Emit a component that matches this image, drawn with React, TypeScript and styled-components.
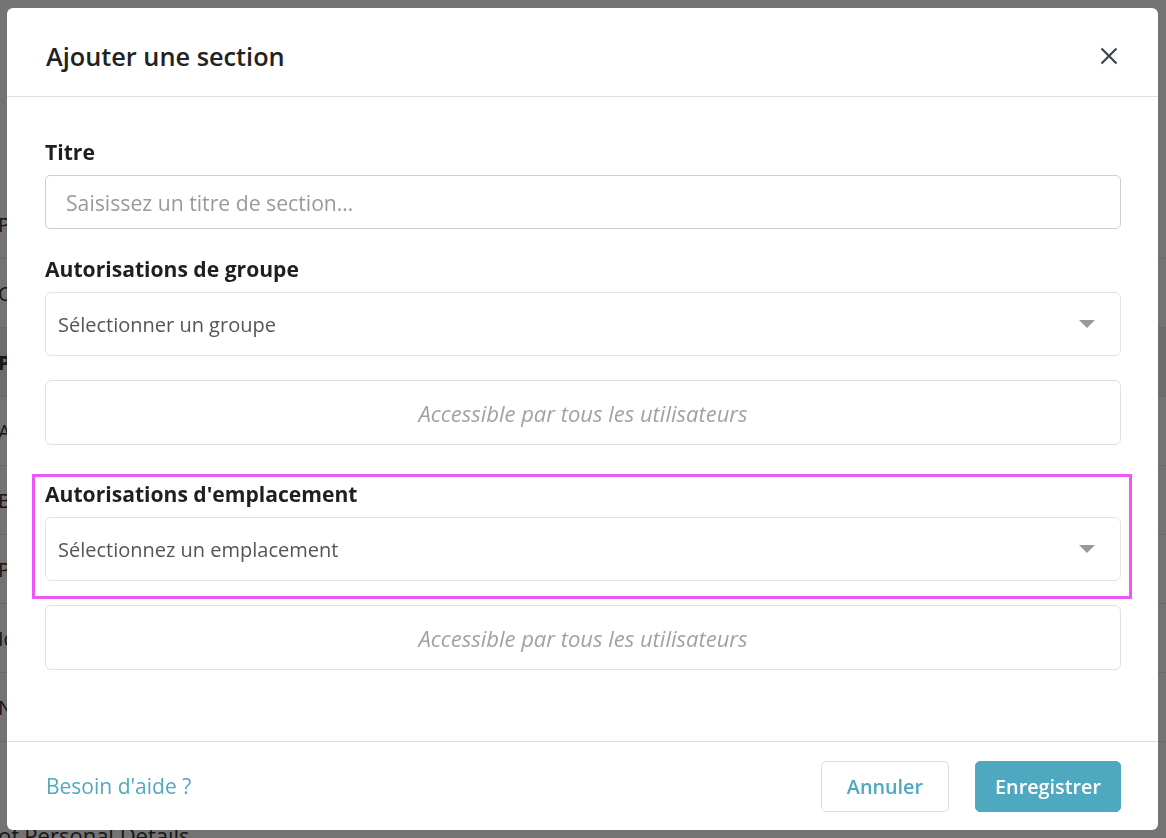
import styled, { createGlobalStyle } from 'styled-components'

const GlobalStyle = createGlobalStyle`
  html, body {
    margin: 0;
    padding: 0;
    width: 100%;
    height: 100%;
    overflow: hidden;
    background: #ffffff;
    font-family: 'Open Sans', 'Lato', sans-serif;
  }
`

const Page = styled.div`
  display: flex;
  flex-direction: column;
  padding-top: 190px;
`

const PageRow = styled.div<{ $bold?: boolean; $shade?: boolean }>`
  display: flex;
  align-items: center;
  height: 68px;
  border-bottom: 1px solid #e6e6e6;
  background: ${(p) => (p.$shade ? '#f2f2f2' : '#ffffff')};
  font-size: 20px;
  font-weight: ${(p) => (p.$bold ? 700 : 400)};
  color: #333;
`

const RowCell = styled.span`
  width: 30px;
  overflow: hidden;
  white-space: nowrap;
  margin-left: -2px;
`

const PageFooter = styled.div`
  font-size: 22px;
  color: #333;
  margin: 78px 0 0 -2px;
  white-space: nowrap;
`

const Overlay = styled.div`
  position: fixed;
  inset: 0;
  background: rgba(0, 0, 0, 0.55);
`

const Modal = styled.div`
  position: fixed;
  top: 8px;
  left: 7px;
  width: 1151px;
  height: 822px;
  background: #ffffff;
  border-radius: 6px;
  display: flex;
  flex-direction: column;
`

const ModalHeader = styled.div`
  height: 89px;
  flex-shrink: 0;
  display: flex;
  align-items: center;
  justify-content: space-between;
  padding: 0 40px 0 39px;
  border-bottom: 1px solid #dedede;
  box-sizing: border-box;
`

const ModalTitle = styled.h2`
  margin: 0;
  font-size: 25.3px;
  font-weight: 600;
  color: #222222;
  padding-top: 8px;
`

const CloseButton = styled.button`
  border: none;
  background: transparent;
  padding: 0;
  width: 18px;
  height: 18px;
  display: flex;
  color: #37474f;
  cursor: pointer;
  margin-top: 8px;
`

const ModalBody = styled.div`
  flex: 1;
  display: flex;
  flex-direction: column;
  padding: 43px 37px 0 38px;
`

const FieldGroup = styled.div<{ $highlight?: boolean; $gapAfter?: number }>`
  position: relative;
  display: flex;
  flex-direction: column;
  gap: 11px;
  margin-bottom: ${(p) => p.$gapAfter ?? 24}px;

  ${(p) =>
    p.$highlight &&
    `
    &::after {
      content: '';
      position: absolute;
      top: -8px;
      left: -13px;
      right: -11px;
      bottom: -18px;
      border: 3px solid #eb58f5;
      pointer-events: none;
    }
  `}
`

const Label = styled.label`
  font-size: 21.1px;
  font-weight: 700;
  color: #1f1f1f;
  line-height: 24px;
`

const TextInput = styled.input`
  height: 54px;
  box-sizing: border-box;
  border: 1px solid #cfcfcf;
  border-radius: 5px;
  padding: 0 20px;
  font-family: inherit;
  font-size: 21.2px;
  color: #333;
  outline: none;

  &::placeholder {
    color: #9a9a9a;
  }
`

const Select = styled.div`
  height: 64px;
  box-sizing: border-box;
  border: 1px solid #e3e3e3;
  border-radius: 6px;
  padding: 0 25px 0 12px;
  display: flex;
  align-items: center;
  justify-content: space-between;
  font-size: 20px;
  color: #555555;
`

const Caret = styled.span`
  width: 0;
  height: 0;
  border-left: 8px solid transparent;
  border-right: 8px solid transparent;
  border-top: 8px solid #999999;
`

const InfoBox = styled.div`
  height: 65px;
  box-sizing: border-box;
  border: 1px solid #e0e0e0;
  border-radius: 6px;
  display: flex;
  align-items: center;
  justify-content: center;
  font-size: 22px;
  font-style: italic;
  color: #9ea5a0;
  margin-bottom: 37px;
`

const ModalFooter = styled.div`
  height: 89px;
  flex-shrink: 0;
  box-sizing: border-box;
  border-top: 1px solid #dedede;
  display: flex;
  align-items: center;
  justify-content: space-between;
  padding: 0 37px 0 39px;
`

const HelpLink = styled.a`
  font-size: 21px;
  color: #52a9bf;
  text-decoration: none;
  cursor: pointer;
`

const Actions = styled.div`
  display: flex;
  gap: 26px;
`

const Button = styled.button<{ $primary?: boolean }>`
  height: 51px;
  padding: 0 ${(p) => (p.$primary ? 19 : 25)}px;
  border-radius: 5px;
  font-family: inherit;
  font-size: 19.8px;
  font-weight: 600;
  cursor: pointer;
  border: 1px solid ${(p) => (p.$primary ? '#4ea9c0' : '#dddddd')};
  background: ${(p) => (p.$primary ? '#4ea9c0' : '#ffffff')};
  color: ${(p) => (p.$primary ? '#ffffff' : '#4ea9c0')};
`

const pageRows = [
  { text: 'Photo', shade: false },
  { text: 'Overview', shade: false },
  { text: 'Personal', bold: true, shade: true },
  { text: 'Address', shade: false },
  { text: 'Birthday', shade: false },
  { text: 'Phone', shade: false },
  { text: 'Identifiers', shade: false },
  { text: 'Notes', shade: false },
]

export default function App() {
  return (
    <>
      <GlobalStyle />
      <Page>
        {pageRows.map((r) => (
          <PageRow key={r.text} $bold={r.bold} $shade={r.shade}>
            <RowCell>{r.text}</RowCell>
          </PageRow>
        ))}
        <PageFooter>of Personal Details</PageFooter>
      </Page>
      <Overlay />
      <Modal role="dialog" aria-labelledby="modal-title">
        <ModalHeader>
          <ModalTitle id="modal-title">Ajouter une section</ModalTitle>
          <CloseButton aria-label="Fermer">
            <svg width="18" height="18" viewBox="0 0 18 18" fill="none">
              <path d="M1.5 1.5l15 15M16.5 1.5l-15 15" stroke="currentColor" strokeWidth="2.2" />
            </svg>
          </CloseButton>
        </ModalHeader>

        <ModalBody>
          <FieldGroup $gapAfter={28}>
            <Label>Titre</Label>
            <TextInput placeholder="Saisissez un titre de section…" />
          </FieldGroup>

          <FieldGroup>
            <Label>Autorisations de groupe</Label>
            <Select>
              Sélectionner un groupe
              <Caret />
            </Select>
          </FieldGroup>
          <InfoBox>Accessible par tous les utilisateurs</InfoBox>

          <FieldGroup $highlight>
            <Label>Autorisations d'emplacement</Label>
            <Select>
              Sélectionnez un emplacement
              <Caret />
            </Select>
          </FieldGroup>
          <InfoBox>Accessible par tous les utilisateurs</InfoBox>
        </ModalBody>

        <ModalFooter>
          <HelpLink>Besoin d'aide ?</HelpLink>
          <Actions>
            <Button>Annuler</Button>
            <Button $primary>Enregistrer</Button>
          </Actions>
        </ModalFooter>
      </Modal>
    </>
  )
}
